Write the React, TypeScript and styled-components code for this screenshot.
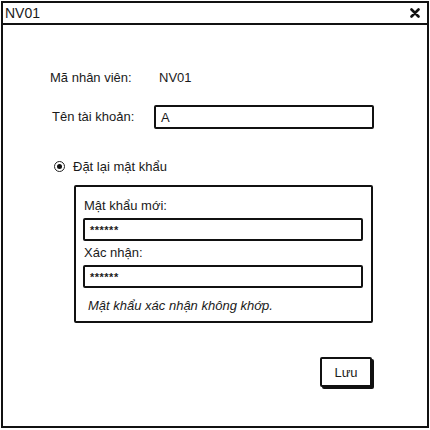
import React from "react";
import styled, { createGlobalStyle } from "styled-components";

const GlobalStyle = createGlobalStyle`
  html, body { margin: 0; padding: 0; background: #fff; }
  body {
    font-family: "Liberation Sans", Arial, sans-serif;
    font-size: 13px;
    color: #1a1a1a;
  }
  #root { width: 430px; height: 430px; padding: 1px 0 0 1px; box-sizing: border-box; }
`;

const Window = styled.div`
  width: 428px;
  height: 427px;
  box-sizing: border-box;
  border: 2px solid #111;
  display: flex;
  flex-direction: column;
  background: #fff;
`;

const TitleBar = styled.div`
  height: 22px;
  box-sizing: border-box;
  border-bottom: 2px solid #111;
  display: flex;
  align-items: center;
  justify-content: space-between;
  padding: 0 7px 0 2px;
  font-size: 14px;
`;

const Body = styled.div`
  flex: 1;
  display: flex;
  flex-direction: column;
  padding: 41px 0 0 47px;
`;

const FieldGrid = styled.div`
  display: grid;
  grid-template-columns: 104px 220px;
  row-gap: 15px;
  align-items: center;
`;

const Label = styled.span<{ $shift?: number }>`
  padding-left: ${({ $shift }) => $shift || 0}px;
  line-height: 24px;
`;

const Value = styled.span`
  padding-left: 5px;
  line-height: 24px;
`;

const TextBox = styled.div<{ $small?: boolean }>`
  height: ${({ $small }) => ($small ? 23 : 24)}px;
  box-sizing: border-box;
  border: 2px solid #111;
  border-radius: 2px;
  display: flex;
  align-items: center;
  padding-left: 5px;
  font-size: ${({ $small }) => ($small ? 11 : 13)}px;
  font-weight: ${({ $small }) => ($small ? "bold" : "normal")};
  letter-spacing: ${({ $small }) => ($small ? "0.5px" : "0")};
`;

const RadioRow = styled.label`
  display: flex;
  align-items: center;
  gap: 8px;
  margin: 29px 0 0 4px;
  height: 16px;
`;

const RadioCircle = styled.span`
  width: 11px;
  height: 11px;
  box-sizing: border-box;
  border: 1.5px solid #222;
  border-radius: 50%;
  display: flex;
  align-items: center;
  justify-content: center;
  &::after {
    content: "";
    width: 5px;
    height: 5px;
    border-radius: 50%;
    background: #111;
  }
`;

const GroupBox = styled.div`
  margin: 11px 0 0 24px;
  width: 299px;
  height: 138px;
  box-sizing: border-box;
  border: 2px solid #111;
  border-radius: 2px;
  padding: 11px 8px 0 7px;
  display: flex;
  flex-direction: column;
`;

const GroupLabel = styled.div<{ $top?: number }>`
  line-height: 16px;
  margin: ${({ $top }) => $top || 0}px 0 4px 1px;
`;

const ErrorText = styled.div`
  font-style: italic;
  line-height: 16px;
  margin: 10px 0 0 5px;
`;

const Footer = styled.div`
  display: flex;
  justify-content: flex-end;
  padding-right: 55px;
  margin-top: 34px;
`;

const Button = styled.button`
  width: 52px;
  height: 30px;
  border: 2px solid #111;
  border-radius: 2px;
  background: #fff;
  box-shadow: 2px 2px 0 #111;
  font-family: inherit;
  font-size: 13px;
  color: #1a1a1a;
  padding: 0;
`;

function CloseIcon() {
  return (
    <svg width="10" height="10" viewBox="0 0 10 10">
      <path d="M1.5 1.5 L8.5 8.5 M8.5 1.5 L1.5 8.5" stroke="#111" strokeWidth="2.6" strokeLinecap="round" />
    </svg>
  );
}

export default function App() {
  return (
    <>
      <GlobalStyle />
      <Window>
        <TitleBar>
          <span>NV01</span>
          <CloseIcon />
        </TitleBar>
        <Body>
          <FieldGrid>
            <Label>Mã nhân viên:</Label>
            <Value>NV01</Value>
            <Label $shift={2}>Tên tài khoản:</Label>
            <TextBox>A</TextBox>
          </FieldGrid>
          <RadioRow>
            <RadioCircle />
            <span>Đặt lại mật khẩu</span>
          </RadioRow>
          <GroupBox>
            <GroupLabel>Mật khẩu mới:</GroupLabel>
            <TextBox $small>******</TextBox>
            <GroupLabel $top={4}>Xác nhận:</GroupLabel>
            <TextBox $small>******</TextBox>
            <ErrorText>Mật khẩu xác nhận không khớp.</ErrorText>
          </GroupBox>
          <Footer>
            <Button>Lưu</Button>
          </Footer>
        </Body>
      </Window>
    </>
  );
}
